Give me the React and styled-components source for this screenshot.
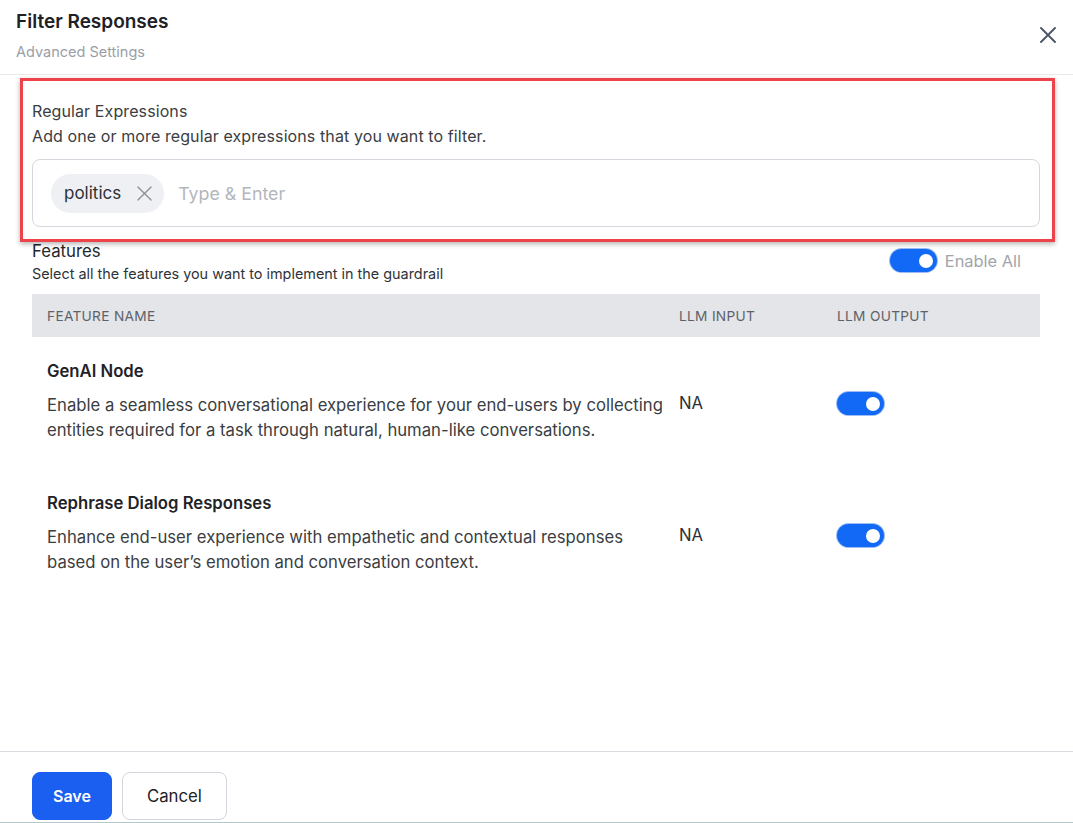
import React from "react";
import styled, { createGlobalStyle } from "styled-components";

const GlobalStyle = createGlobalStyle`
  html, body {
    margin: 0;
    padding: 0;
    background: #fff;
  }
  body {
    font-family: Inter, "Noto Sans", sans-serif;
    color: #333;
  }
  * {
    box-sizing: border-box;
  }
`;

const Panel = styled.div`
  width: 1073px;
  height: 823px;
  display: flex;
  flex-direction: column;
  background: #fff;
  border-bottom: 1px solid #b4c6c8;
`;

const Header = styled.div`
  height: 75px;
  border-bottom: 1px solid #e9eaec;
  display: flex;
  justify-content: space-between;
  align-items: flex-start;
  padding: 10px 16px 0 16px;
`;

const Title = styled.h1`
  margin: 0;
  font-size: 19px;
  line-height: 24px;
  font-weight: 600;
  color: #1d2126;
`;

const Subtitle = styled.div`
  margin-top: 8px;
  font-size: 14.5px;
  line-height: 20px;
  color: #9a9ea6;
`;

const CloseButton = styled.button`
  border: none;
  background: none;
  padding: 0;
  margin-top: 15px;
  width: 18px;
  height: 20px;
  display: flex;
  align-items: center;
  justify-content: center;
  cursor: pointer;
`;

const Body = styled.div`
  flex: 1;
  padding: 0 33px 0 32px;
`;

const Highlight = styled.section`
  margin: 3px -15px 0 -12px;
  border: 3px solid #ee4449;
  padding: 18px 12px 12px 9px;
  box-shadow: 0 2px 5px rgba(0, 0, 0, 0.3);
  position: relative;
  z-index: 1;
`;

const Label = styled.div`
  font-size: 16px;
  line-height: 25px;
  letter-spacing: 0.1px;
  color: #3a3d42;
`;

const TagInput = styled.div`
  margin-top: 10px;
  height: 68px;
  border: 1px solid #d5d7de;
  border-radius: 8px;
  display: flex;
  align-items: center;
  gap: 14px;
  padding: 0 18px;
`;

const Chip = styled.span`
  display: inline-flex;
  align-items: center;
  gap: 16px;
  height: 39px;
  padding: 0 12px 0 13px;
  background: #eff0f4;
  border-radius: 20px;
  font-size: 17px;
  color: #2d3035;
`;

const Placeholder = styled.span`
  font-size: 17.8px;
  color: #b3b6bd;
`;

const FeaturesHead = styled.div`
  display: flex;
  justify-content: space-between;
  align-items: center;
  margin-top: -2px;
`;

const SectionTitle = styled.div`
  font-size: 16.8px;
  line-height: 22px;
  color: #24272b;
`;

const SmallText = styled.div`
  margin-top: 3px;
  font-size: 14.4px;
  line-height: 18px;
  color: #2f3338;
`;

const EnableAll = styled.label`
  display: flex;
  align-items: center;
  gap: 8px;
  margin-right: 19px;
  margin-top: -2px;
  font-size: 16.4px;
  color: #a0a4ab;
`;

const Toggle = styled.span`
  display: inline-block;
  position: relative;
  width: 47px;
  height: 23px;
  border-radius: 12px;
  background: #1269f6;
  box-shadow: 0 0 0 1px #9dbdf3;

  &::after {
    content: "";
    position: absolute;
    top: 4.5px;
    right: 4px;
    width: 14px;
    height: 14px;
    border-radius: 50%;
    background: #fff;
  }
`;

const Table = styled.div`
  margin-top: 11px;
`;

const Row = styled.div`
  display: grid;
  grid-template-columns: 632px 158px 1fr;
  background: ${(p) => (p.$head ? "#e4e5e8" : "transparent")};
  height: ${(p) => (p.$head ? "43px" : "auto")};
  align-items: ${(p) => (p.$head ? "center" : "start")};
  padding: ${(p) => (p.$head ? "0" : "22px 0 26px")};
`;

const HeadCell = styled.div`
  padding-left: 15px;
  font-size: 13.7px;
  letter-spacing: 0.3px;
  color: #5e6268;
  text-transform: uppercase;
`;

const Cell = styled.div`
  padding-left: 15px;
  padding-top: ${(p) => p.$top || 0}px;
  font-size: 16.7px;
  line-height: 24px;
  color: #2d3035;
`;

const FeatureTitle = styled.div`
  font-size: 16.7px;
  line-height: 24px;
  font-weight: 600;
  color: #1f2328;
`;

const FeatureDesc = styled.div`
  margin-top: 10px;
  width: 624px;
  font-size: 16.7px;
  line-height: 25px;
  color: #3a3d42;
`;

const Footer = styled.div`
  border-top: 1px solid #dadce2;
  height: 71px;
  padding: 20px 32px 0;
  display: flex;
  gap: 10px;
  align-items: flex-start;
`;

const Button = styled.button`
  height: 48px;
  padding: 0 ${(p) => (p.$primary ? 20 : 24)}px;
  border-radius: 8px;
  font-family: inherit;
  font-size: ${(p) => (p.$primary ? 16 : 16.8)}px;
  font-weight: ${(p) => (p.$primary ? 600 : 400)};
  background: ${(p) => (p.$primary ? "#1a5ff0" : "#fff")};
  color: ${(p) => (p.$primary ? "#fff" : "#1d2126")};
  border: 1px solid ${(p) => (p.$primary ? "#1a5ff0" : "#d3d6dd")};
  cursor: pointer;
`;

const XIcon = ({ size, color, width }) => (
  <svg width={size} height={size} viewBox="0 0 16 16" fill="none">
    <path
      d="M1 1L15 15M15 1L1 15"
      stroke={color}
      strokeWidth={width}
      strokeLinecap="round"
    />
  </svg>
);

const features = [
  {
    name: "GenAI Node",
    desc:
      "Enable a seamless conversational experience for your end-users by collecting entities required for a task through natural, human-like conversations.",
  },
  {
    name: "Rephrase Dialog Responses",
    desc:
      "Enhance end-user experience with empathetic and contextual responses based on the user\u2019s emotion and conversation context.",
  },
];

export default function App() {
  return (
    <Panel>
      <GlobalStyle />
      <Header>
        <div>
          <Title>Filter Responses</Title>
          <Subtitle>Advanced Settings</Subtitle>
        </div>
        <CloseButton aria-label="Close">
          <XIcon size={16} color="#4a5566" width={1.9} />
        </CloseButton>
      </Header>

      <Body>
        <Highlight>
          <Label>Regular Expressions</Label>
          <Label>Add one or more regular expressions that you want to filter.</Label>
          <TagInput>
            <Chip>
              politics
              <XIcon size={15} color="#8a8e96" width={1.4} />
            </Chip>
            <Placeholder>Type &amp; Enter</Placeholder>
          </TagInput>
        </Highlight>

        <FeaturesHead>
          <div>
            <SectionTitle>Features</SectionTitle>
            <SmallText>
              Select all the features you want to implement in the guardrail
            </SmallText>
          </div>
          <EnableAll>
            <Toggle />
            Enable All
          </EnableAll>
        </FeaturesHead>

        <Table>
          <Row $head>
            <HeadCell>Feature Name</HeadCell>
            <HeadCell>LLM Input</HeadCell>
            <HeadCell>LLM Output</HeadCell>
          </Row>
          {features.map((f) => (
            <Row key={f.name}>
              <Cell>
                <FeatureTitle>{f.name}</FeatureTitle>
                <FeatureDesc>{f.desc}</FeatureDesc>
              </Cell>
              <Cell $top={32}>NA</Cell>
              <Cell $top={33}>
                <Toggle />
              </Cell>
            </Row>
          ))}
        </Table>
      </Body>

      <Footer>
        <Button $primary>Save</Button>
        <Button>Cancel</Button>
      </Footer>
    </Panel>
  );
}
